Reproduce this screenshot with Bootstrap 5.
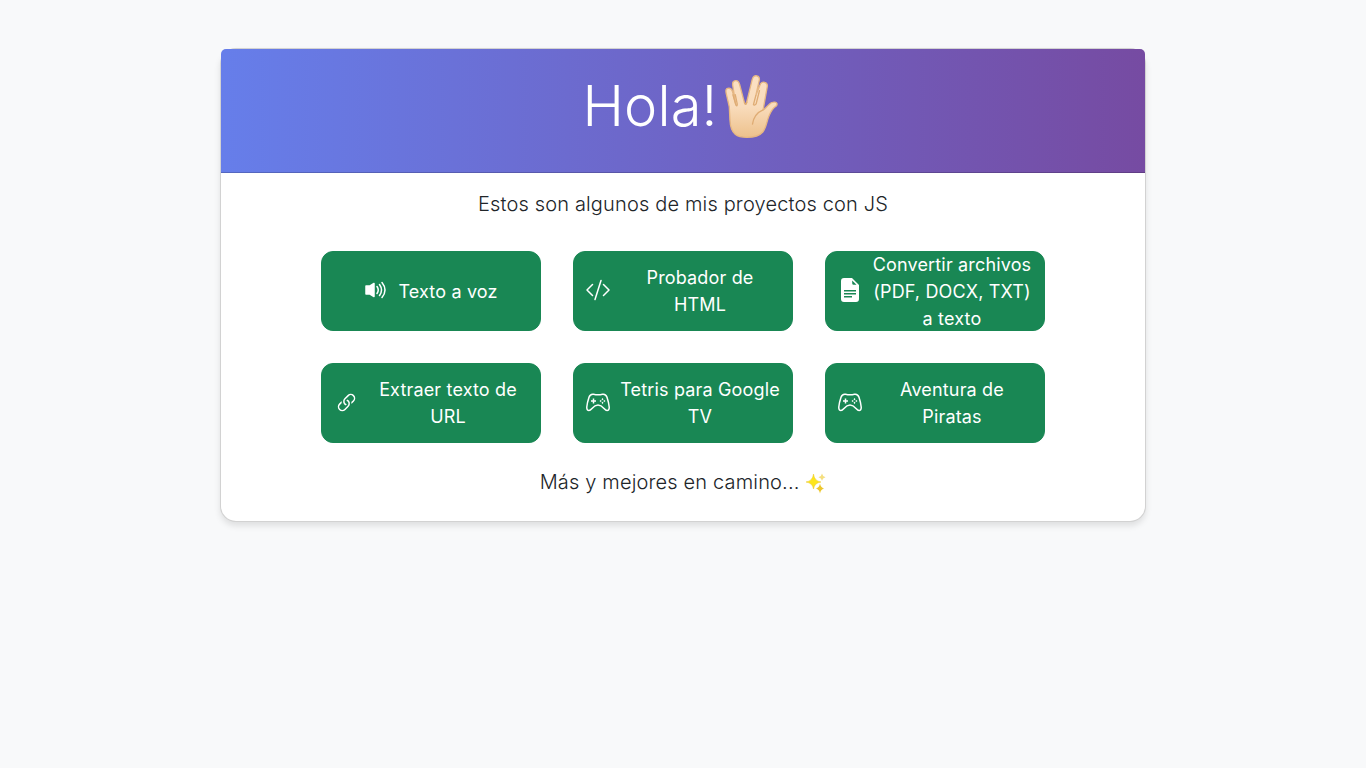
<!DOCTYPE html>
<html lang="es">
<head>
<meta charset="utf-8">
<meta name="viewport" content="width=device-width, initial-scale=1">
<title>Proyectos con JS</title>
<link href="https://cdn.jsdelivr.net/npm/bootstrap@5.3.0/dist/css/bootstrap.min.css" rel="stylesheet">
<style>
  body { font-family: Inter, sans-serif; letter-spacing: .01em; }
  .project-card { border-radius: 16px; box-shadow: 0 4px 6px rgba(0, 0, 0, .1); }
  .hero { background: linear-gradient(90deg, #667eea, #764ba2); }
  .hand { width: 53px; height: 63px; margin: 0 6px 0 7px; vertical-align: -12px; }
  .spark { width: 20px; height: 22px; margin-left: 1px; vertical-align: -5px; }
  .project-grid { display: grid; grid-template-columns: repeat(auto-fit, 220px); gap: 32px; justify-content: center; max-width: 724px; }
  .project-btn { height: 80px; padding: 0 12px; gap: 10px; border-radius: 12px; font-size: 18px; line-height: 27px; }
  .project-btn svg { width: 24px; height: 24px; margin-bottom: 3px; }
  .project-btn span { min-width: 0; }
</style>
</head>
<body class="bg-light">
<main class="container py-5">
  <div class="row justify-content-center">
    <div class="col-lg-10">
      <div class="card project-card text-center">
        <div class="card-header hero text-white p-4">
          <h1 class="display-4 fw-light">Hola!<svg class="hand" viewBox="26 16 158 190" role="img" aria-label="Saludo vulcano">
            <defs><linearGradient id="skin" x2="0" y2="1"><stop offset="0" stop-color="#fbe0c4"/><stop offset=".5" stop-color="#f9dcbc"/><stop offset="1" stop-color="#edc18c"/></linearGradient></defs>
            <path d="M40 152L38 112L29 73C26 60 29 56 35 56C42 55 46 60 48 67L57 102L49 51C46 38 50 34 56 33C63 32 67 37 69 44L84 101Q87 108 90 100L107 30C110 18 116 17 122 19C129 21 130 27 128 34L118 78L130 48C133 38 139 36 145 38C152 40 154 46 152 54L140 121C144 121 150 112 158 105C163 99 169 97 176 98C183 99 184 105 179 110C170 115 164 125 158 139C151 155 150 174 139 188C128 201 111 204 91 204C63 204 42 197 40 152Z" fill="url(#skin)" stroke="#e6b783" stroke-width="4" stroke-linejoin="round"/>
            <path d="M49 76L58 107Q62 112 62 104L56 75M84 98Q87 111 91 98M118 78L111 105Q113 110 119 103L129 63M140 121C121 129 111 143 108 164" fill="none" stroke="#dfac74" stroke-width="4" stroke-linecap="round"/>
          </svg></h1>
        </div>
        <div class="card-body pb-4">
          <p class="lead mb-0">Estos son algunos de mis proyectos con JS</p>
          <nav class="project-grid mx-auto mt-4 pt-2 mb-4" aria-label="Proyectos">
            <a href="#voz" class="btn btn-success project-btn d-flex align-items-center justify-content-center">
              <svg class="flex-shrink-0" viewBox="0 0 24 24" fill="none" stroke="currentColor" stroke-width="1.5" stroke-linecap="round"><path d="M2 8h4l4-2.500v13l-4-2.500H2z" fill="currentColor" stroke-linejoin="round"/><path d="M13 8.500q2.500 3.500 0 7M15.500 6.500q4 5.500 0 11M18 4.500q6 7.500 0 15"/></svg>
              <span>Texto a voz</span></a>
            <a href="#html" class="btn btn-success project-btn d-flex align-items-center justify-content-center">
              <svg class="flex-shrink-0" viewBox="0 0 24 24" fill="none" stroke="currentColor" stroke-width="1.5" stroke-linecap="round" stroke-linejoin="round"><path d="M6.500 6.500L1 12l5.500 5.500M17.500 6.500L23 12l-5.500 5.500M15 2.500L9 21.500"/></svg>
              <span class="flex-grow-1">Probador de HTML</span></a>
            <a href="#archivos" class="btn btn-success project-btn d-flex align-items-center justify-content-center">
              <svg class="flex-shrink-0" viewBox="0 0 24 24"><path fill="currentColor" fill-rule="evenodd" d="M6 0h8l7 7v14a3 3 0 0 1-3 3H6a3 3 0 0 1-3-3V3a3 3 0 0 1 3-3zm8.200 2.500v2.800a1.500 1.500 0 0 0 1.500 1.500h2.800zM6 12v1.500h12V12zm0 3v1.500h12V15zm0 3v1.500h8V18z"/></svg>
              <span class="flex-grow-1">Convertir archivos (PDF, DOCX, TXT) a texto</span></a>
            <a href="#url" class="btn btn-success project-btn d-flex align-items-center justify-content-center">
              <svg class="flex-shrink-0" viewBox="0 0 16 16" fill="currentColor"><path d="M6.354 5.500H4a3 3 0 0 0 0 6h3a3 3 0 0 0 2.830-4H9c-.086 0-.170.010-.250.031A2 2 0 0 1 7 10.500H4a2 2 0 1 1 0-4h1.535c.218-.376.495-.714.820-1z" transform="rotate(-45 8 8)"/><path d="M9 5.500a3 3 0 0 0-2.830 4h1.098A2 2 0 0 1 9 6.500h3a2 2 0 1 1 0 4h-1.535a4 4 0 0 1-.820 1H12a3 3 0 1 0 0-6z" transform="rotate(-45 8 8)"/></svg>
              <span class="flex-grow-1">Extraer texto de URL</span></a>
            <a href="#tetris" class="btn btn-success project-btn d-flex align-items-center justify-content-center">
              <svg class="flex-shrink-0" viewBox="0 0 24 24" fill="none" stroke="currentColor" stroke-width="1.5" stroke-linejoin="round"><path d="M7.500 4.200q4.500 1.200 9 0c2-.3 3.700.5 4.500 3 1 3 1.900 6.500 2.200 9.800.2 2.500-.9 3.500-2.200 3.500-2.700 0-3.800-5.500-9-5.500s-6.300 5.500-9 5.500c-1.300 0-2.400-1-2.200-3.500C1.100 13.700 2 10.200 3 7.200c.8-2.500 2.500-3.300 4.500-3z"/><path d="M7.500 8.500v5M5 11h5"/><path stroke="none" fill="currentColor" d="M16.500 8l1 1.200-1 1-1-1zm0 3.800l1 1-1 1.200-1-1.200zm-3-.8l1.200-1 1 1-1 1zm3.800 0l1-1 1.200 1-1.200 1z"/></svg>
              <span class="flex-grow-1">Tetris para Google TV</span></a>
            <a href="#piratas" class="btn btn-success project-btn d-flex align-items-center justify-content-center">
              <svg class="flex-shrink-0" viewBox="0 0 24 24" fill="none" stroke="currentColor" stroke-width="1.5" stroke-linejoin="round"><path d="M7.500 4.200q4.500 1.200 9 0c2-.3 3.700.5 4.500 3 1 3 1.900 6.500 2.200 9.800.2 2.500-.9 3.500-2.200 3.500-2.700 0-3.800-5.500-9-5.500s-6.300 5.500-9 5.500c-1.300 0-2.400-1-2.200-3.500C1.100 13.700 2 10.200 3 7.200c.8-2.500 2.500-3.300 4.500-3z"/><path d="M7.500 8.500v5M5 11h5"/><path stroke="none" fill="currentColor" d="M16.500 8l1 1.200-1 1-1-1zm0 3.800l1 1-1 1.200-1-1.200zm-3-.8l1.200-1 1 1-1 1zm3.800 0l1-1 1.200 1-1.200 1z"/></svg>
              <span class="flex-grow-1">Aventura de Piratas</span></a>
          </nav>
          <p class="lead mb-0">Más y mejores en camino... <svg class="spark" viewBox="0 0 20 22" role="img" aria-label="Destellos"><path fill="#fde51c" stroke="#e8c92c" stroke-width=".5" d="M7.500 2Q8.300 9 15 10 8.300 11 7.500 17 6.700 11 0 10 6.700 9 7.500 2z"/><path fill="#f5df80" d="M16 1.500q.5 3 3.500 3.700-3 .7-3.500 3.600-.5-2.900-3.500-3.600 3-.7 3.500-3.700z"/><path fill="#edc72e" d="M14 11.500q.6 4 4 5-3.400 1-4 5-.6-4-4-5 3.400-1 4-5z"/></svg></p>
        </div>
      </div>
    </div>
  </div>
</main>
<script src="https://cdn.jsdelivr.net/npm/bootstrap@5.3.0/dist/js/bootstrap.bundle.min.js"></script>
</body>
</html>
